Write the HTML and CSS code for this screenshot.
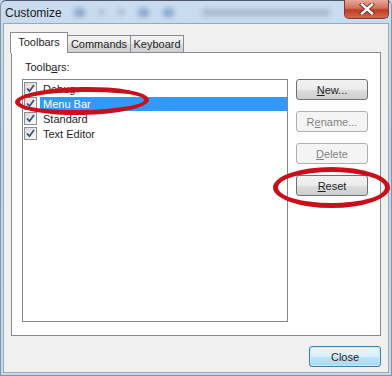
FILE: index.html
```html
<!DOCTYPE html>
<html>
<head>
  <title>Customize</title>
  <link rel="stylesheet" href="styles.css">
</head>
<body>
  <div class="window">
    <div class="titlebar">
      <span class="title">Customize</span>
      <div class="glass">
        <span class="blob blob-blue"></span>
        <span class="blob blob-gray small"></span>
        <span class="blob blob-gray small"></span>
        <span class="blob blob-blue"></span>
        <span class="blob blob-blue"></span>
        <span class="blob blob-text"></span>
      </div>
      <div class="close-x">
        <svg width="16" height="12" viewBox="0 0 16 12">
          <path d="M3 1.5 L13 10.5 M13 1.5 L3 10.5" stroke="#6a3028" stroke-width="4.2" stroke-linecap="square"/>
          <path d="M3 1.5 L13 10.5 M13 1.5 L3 10.5" stroke="#ffffff" stroke-width="2.4" stroke-linecap="square"/>
        </svg>
      </div>
    </div>

    <div class="client">
      <div class="tabs">
        <div class="tab active">Toolbars</div>
        <div class="tab">Commands</div>
        <div class="tab">Keyboard</div>
      </div>

      <div class="panel">
        <div class="list-label">Toolb<u>a</u>rs:</div>

        <div class="listbox">
          <div class="row">
            <span class="check"><svg width="11" height="11" viewBox="0 0 11 11"><path d="M2 5.5 L4.5 8.2 L9 2" fill="none" stroke="#3e4f78" stroke-width="1.8"/></svg></span>
            <span class="row-text">Debug</span>
          </div>
          <div class="row selected">
            <span class="check"><svg width="11" height="11" viewBox="0 0 11 11"><path d="M2 5.5 L4.5 8.2 L9 2" fill="none" stroke="#3e4f78" stroke-width="1.8"/></svg></span>
            <span class="row-text">Menu Bar</span>
          </div>
          <div class="row">
            <span class="check"><svg width="11" height="11" viewBox="0 0 11 11"><path d="M2 5.5 L4.5 8.2 L9 2" fill="none" stroke="#3e4f78" stroke-width="1.8"/></svg></span>
            <span class="row-text">Standard</span>
          </div>
          <div class="row">
            <span class="check"><svg width="11" height="11" viewBox="0 0 11 11"><path d="M2 5.5 L4.5 8.2 L9 2" fill="none" stroke="#3e4f78" stroke-width="1.8"/></svg></span>
            <span class="row-text">Text Editor</span>
          </div>
        </div>

        <div class="buttons">
          <button class="btn"><u>N</u>ew...</button>
          <button class="btn" disabled>R<u>e</u>name...</button>
          <button class="btn" disabled><u>D</u>elete</button>
          <button class="btn"><u>R</u>eset</button>
        </div>
      </div>

      <div class="footer">
        <button class="btn default">Close</button>
      </div>
    </div>

    <!-- red annotation rings drawn over the dialog -->
    <div class="mark mark-menu"></div>
    <div class="mark mark-reset"></div>
  </div>
</body>
</html>
```

FILE: styles.css
```css
body {
  margin: 0;
  padding: 0;
  font-family: 'Liberation Sans', Arial, sans-serif;
  font-size: 11px;
  color: #000000;
  background-color: #c4d7ec;
}

.window {
  position: relative;
  width: 392px;
  height: 376px;
  box-sizing: border-box;
  border: 1px solid #8194aa;
  border-top-color: #4e5866;
  border-radius: 6px 6px 0 0;
  padding: 0 2px 2px 2px;
  display: flex;
  flex-direction: column;
  background: linear-gradient(to bottom, #cadcef 0%, #bfd4eb 40%, #c6d9ed 100%);
}

.titlebar {
  height: 22px;
  display: flex;
  align-items: center;
}

.title {
  font-size: 12px;
  margin-left: 2px;
  margin-top: 2px;
  color: #1a1a1a;
}

.glass {
  flex: 1;
  display: flex;
  align-items: center;
  padding-left: 12px;
  height: 100%;
  overflow: hidden;
}

.blob {
  display: inline-block;
  height: 9px;
  width: 11px;
  margin-right: 14px;
  border-radius: 3px;
  filter: blur(2.5px);
  opacity: 0.8;
}

.blob-blue {
  background-color: #7d9cc6;
}

.blob-gray {
  background-color: #9aa7b8;
}

.blob.small {
  width: 6px;
  height: 6px;
}

.blob-text {
  width: 130px;
  height: 7px;
  background-color: #a2b1c4;
  margin-left: 14px;
}

.close-x {
  align-self: flex-start;
  width: 45px;
  height: 19px;
  margin-top: -1px;
  box-sizing: border-box;
  border: 1px solid #7a3a30;
  border-top: none;
  border-radius: 0 0 5px 5px;
  background: linear-gradient(to bottom, #e9a99a 0%, #d4705b 45%, #bf3b24 55%, #d46a4f 100%);
  display: flex;
  align-items: center;
  justify-content: center;
}

.client {
  flex: 1;
  background-color: #f0f0f0;
  border: 1px solid #97a9bd;
  padding: 8px 0 0 7px;
}

.tabs {
  display: flex;
  align-items: flex-end;
  height: 20px;
  margin-left: -1px;
  position: relative;
  z-index: 1;
}

.tab {
  box-sizing: border-box;
  height: 17px;
  border: 1px solid #898c95;
  border-bottom: none;
  background: linear-gradient(to bottom, #f3f3f3 0%, #ebebeb 50%, #dddddd 51%, #cfcfcf 100%);
  display: flex;
  align-items: center;
  justify-content: center;
  margin-left: -1px;
  color: #1e1e1e;
}

.tab:nth-child(2) {
  width: 64px;
}

.tab:nth-child(3) {
  width: 54px;
}

.tab.active {
  width: 58px;
  height: 21px;
  margin-left: 0;
  margin-bottom: -1px;
  background: #ffffff;
  padding-bottom: 2px;
  position: relative;
  z-index: 2;
}

.panel {
  width: 370px;
  height: 284px;
  box-sizing: border-box;
  border: 1px solid #898c95;
  background-color: #ffffff;
  padding: 7px 0 0 10px;
  display: grid;
  grid-template-columns: 266px 72px;
  grid-template-rows: 15px 243px;
  column-gap: 8px;
  row-gap: 4px;
}

.list-label {
  grid-column: 1 / 3;
  margin-left: 3px;
  line-height: 15px;
  color: #1e1e1e;
}

.listbox {
  box-sizing: border-box;
  border: 1px solid #828790;
  padding-top: 1px;
}

.row {
  height: 15px;
  display: flex;
  align-items: center;
}

.check {
  width: 13px;
  height: 13px;
  box-sizing: border-box;
  margin-left: 1px;
  border: 1px solid #8e8f8f;
  background: linear-gradient(135deg, #d6d6d6 0%, #ffffff 100%);
  display: flex;
  align-items: center;
  justify-content: center;
}

.row-text {
  flex: 1;
  margin-left: 3px;
  padding-left: 3px;
  height: 14px;
  line-height: 14px;
  color: #1e1e1e;
}

.row.selected .row-text {
  background-color: #3399ff;
  color: #ffffff;
}

.buttons {
  display: flex;
  flex-direction: column;
  gap: 11px;
}

.btn {
  width: 72px;
  height: 21px;
  box-sizing: border-box;
  border: 1px solid #707070;
  border-radius: 3px;
  background: linear-gradient(to bottom, #f2f2f2 0%, #ebebeb 50%, #dddddd 51%, #cfcfcf 100%);
  font-family: 'Liberation Sans', Arial, sans-serif;
  font-size: 11px;
  color: #1e1e1e;
  padding: 0;
}

.btn:disabled {
  border-color: #adb2b5;
  background: #f4f4f4;
  color: #838383;
}

.btn.default {
  border-color: #3c7fb1;
  background: linear-gradient(to bottom, #eaf6fd 0%, #d9f0fc 50%, #bee6fd 51%, #a7d9f5 100%);
  box-shadow: inset 0 0 0 1px #c9e8f8;
}

.footer {
  width: 370px;
  display: flex;
  justify-content: flex-end;
  margin-top: 10px;
}

.mark {
  position: absolute;
  border: 5px solid #c8101c;
  border-radius: 50%;
  box-sizing: border-box;
}

.mark-menu {
  left: 14px;
  top: 86px;
  width: 134px;
  height: 28px;
  transform: rotate(-1deg);
}

.mark-reset {
  left: 272px;
  top: 166px;
  width: 117px;
  height: 41px;
}
```
